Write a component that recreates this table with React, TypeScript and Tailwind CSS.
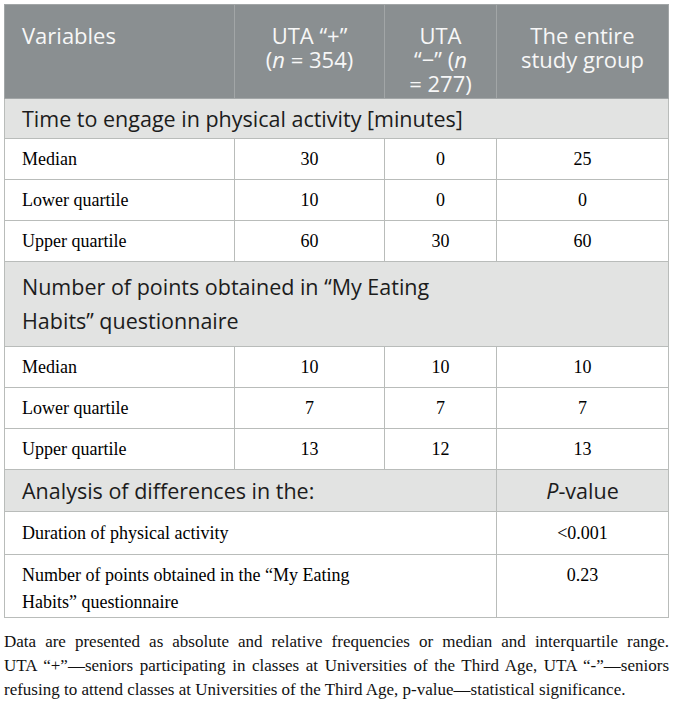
const sans = "font-['Open_Sans','Noto_Sans',sans-serif]";
const serif = "font-['Liberation_Serif','DejaVu_Serif',serif]";

const groups = [
  {
    title: "Time to engage in physical activity [minutes]",
    single: true,
    rows: [
      ["Median", "30", "0", "25"],
      ["Lower quartile", "10", "0", "0"],
      ["Upper quartile", "60", "30", "60"],
    ],
  },
  {
    title: "Number of points obtained in \u201cMy Eating Habits\u201d questionnaire",
    single: false,
    rows: [
      ["Median", "10", "10", "10"],
      ["Lower quartile", "7", "7", "7"],
      ["Upper quartile", "13", "12", "13"],
    ],
  },
];

const cellB = "border border-[#b9bcba]";
const headB = "border border-[#a2a6a7]";

export default function App() {
  return (
    <div className="w-[673px] h-[715px] bg-white px-[4px] pt-[4px] text-black overflow-hidden">
      <table className="w-[664px] table-fixed border-collapse border border-[#b9bcba]">
        <colgroup>
          <col className="w-[230px]" />
          <col className="w-[150px]" />
          <col className="w-[112px]" />
          <col className="w-[172px]" />
        </colgroup>
        <thead>
          <tr className={`bg-[#8a8f91] text-[#f7f7f7] ${sans} text-[22px] leading-[24px] align-top`}>
            <th className={`${headB} h-[94px] px-[17px] pt-[18px] text-left font-normal`}>Variables</th>
            <th className={`${headB} px-[4px] pt-[18px] text-center font-normal`}>
              UTA &ldquo;+&rdquo;
              <br />
              (<i>n</i> = 354)
            </th>
            <th className={`${headB} px-[4px] pt-[18px] text-center font-normal`}>
              UTA
              <br />
              &ldquo;&minus;&rdquo; (<i>n</i>
              <br />= 277)
            </th>
            <th className={`${headB} px-[4px] pt-[18px] text-center font-normal`}>
              The entire
              <br />
              study group
            </th>
          </tr>
        </thead>
        <tbody>
          {groups.map((g) => (
            <>
              <tr key={g.title} className="bg-[#e2e3e2]">
                <td
                  colSpan={4}
                  className={`${cellB} px-[17px] ${g.single ? "py-[2.5px]" : "pt-[7.5px] pb-[8.5px]"} ${sans} text-[21.5px] leading-[34px] text-[#1c1c1c]`}
                >
                  <div className={g.single ? "" : "max-w-[440px]"}>{g.title}</div>
                </td>
              </tr>
              {g.rows.map((r, i) => (
                <tr key={g.title + i} className={`${serif} text-[18px] leading-[26px]`}>
                  <td className={`${cellB} px-[17px] py-[7px]`}>{r[0]}</td>
                  <td className={`${cellB} px-[8px] py-[7px] text-center`}>{r[1]}</td>
                  <td className={`${cellB} px-[8px] py-[7px] text-center`}>{r[2]}</td>
                  <td className={`${cellB} px-[8px] py-[7px] text-center`}>{r[3]}</td>
                </tr>
              ))}
            </>
          ))}
          <tr className={`bg-[#e2e3e2] ${sans} text-[21.5px] leading-[34px] text-[#1c1c1c]`}>
            <td colSpan={3} className={`${cellB} px-[17px] py-[3.5px]`}>Analysis of differences in the:</td>
            <td className={`${cellB} px-[8px] py-[3.5px] text-center`}>
              <i>P</i>-value
            </td>
          </tr>
          <tr className={`${serif} text-[18px] leading-[27px] align-top`}>
            <td colSpan={3} className={`${cellB} px-[17px] py-[7.5px]`}>Duration of physical activity</td>
            <td className={`${cellB} px-[8px] py-[7.5px] text-center`}>&lt;0.001</td>
          </tr>
          <tr className={`${serif} text-[18px] leading-[27px] align-top`}>
            <td colSpan={3} className={`${cellB} px-[17px] pt-[7px] pb-[1px]`}>
              <div className="max-w-[380px]">Number of points obtained in the &ldquo;My Eating Habits&rdquo; questionnaire</div>
            </td>
            <td className={`${cellB} px-[8px] pt-[7px] pb-[1px] text-center`}>0.23</td>
          </tr>
        </tbody>
      </table>
      <div className={`${serif} mt-[12px] text-[17px] leading-[24px] text-[#111]`}>
        <p className="text-justify [text-align-last:justify]">
          Data are presented as absolute and relative frequencies or median and interquartile range.
        </p>
        <p className="text-justify [text-align-last:justify]">
          UTA &ldquo;+&rdquo;&mdash;seniors participating in classes at Universities of the Third Age, UTA &ldquo;-&rdquo;&mdash;seniors
        </p>
        <p>refusing to attend classes at Universities of the Third Age, p-value&mdash;statistical significance.</p>
      </div>
    </div>
  );
}
